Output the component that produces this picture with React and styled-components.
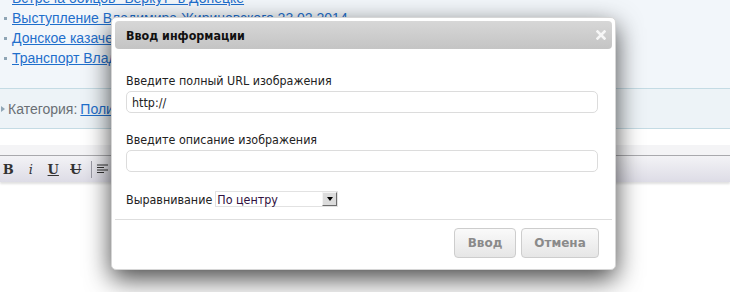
import React from 'react';
import styled, { createGlobalStyle } from 'styled-components';

const GlobalStyle = createGlobalStyle`
  html, body {
    margin: 0;
    padding: 0;
    background: #fff;
  }
  body {
    font-family: "DejaVu Sans Condensed", "DejaVu Sans", Verdana, sans-serif;
    font-size: 12.4px;
    color: #222;
  }
`;

const Page = styled.div`
  position: relative;
  width: 730px;
  height: 292px;
  overflow: hidden;
  background: #fff;
`;

const TopArea = styled.div`
  height: 88px;
  background: #f2f6fa;
  overflow: hidden;
`;

const NewsList = styled.ul`
  list-style: none;
  margin: -12px 0 0 0;
  padding: 0 0 0 4px;
  font-family: "Liberation Sans", Arial, sans-serif;
  font-size: 14px;
`;

const NewsItem = styled.li`
  display: flex;
  align-items: center;
  height: 20px;
  gap: 5px;
  &::before {
    content: '';
    width: 3px;
    height: 3px;
    background: #8fa5b5;
  }
  a {
    color: #1f6fcc;
    text-decoration: underline;
    white-space: nowrap;
  }
`;

const CategoryBar = styled.div`
  height: 39px;
  border-top: 1px solid #c4dbe4;
  border-bottom: 1px solid #c4dbe4;
  background: #edf3f7;
  display: flex;
  align-items: center;
  gap: 3px;
  font-family: "Liberation Sans", Arial, sans-serif;
  font-size: 14px;
  color: #6a6f74;
  a {
    color: #1f6fcc;
    text-decoration: underline;
  }
`;

const Arrow = styled.span`
  width: 0;
  height: 0;
  border-left: 4px solid #8fa5b5;
  border-top: 3px solid transparent;
  border-bottom: 3px solid transparent;
  margin-left: 1px;
`;

const Gap = styled.div`
  height: 16px;
`;

const EditorTop = styled.div`
  height: 10px;
  background: #f4f4f6;
  border-bottom: 1px solid #a9a9ad;
`;

const Toolbar = styled.div`
  height: 26px;
  display: flex;
  align-items: center;
  background: linear-gradient(#f3f3f6, #dddce6);
  box-shadow: 0 2px 2px rgba(0, 0, 0, 0.12);
  font-family: "DejaVu Serif", "Liberation Serif", serif;
  font-size: 13px;
  color: #333;
`;

const ToolButton = styled.span`
  width: 22.5px;
  text-align: center;
  font-weight: ${p => (p.$italic ? 'normal' : 'bold')};
  font-style: ${p => (p.$italic ? 'italic' : 'normal')};
  text-decoration: ${p => p.$deco || 'none'};
  &:first-child {
    margin-left: -3px;
  }
`;

const ToolSep = styled.span`
  width: 1px;
  height: 17px;
  background: #9a9aa4;
  margin: 0 5px 0 4px;
`;

const Dialog = styled.div`
  position: absolute;
  left: 111px;
  top: 17px;
  width: 505px;
  height: 253px;
  box-sizing: border-box;
  padding: 3px;
  background: #fff;
  border: 1px solid #d6d6d6;
  border-radius: 5px;
  box-shadow: 0 9px 26px rgba(0, 0, 0, 0.72);
  display: flex;
  flex-direction: column;
`;

const TitleBar = styled.div`
  height: 28px;
  flex: none;
  display: flex;
  align-items: center;
  justify-content: space-between;
  padding: 0 6px 0 11px;
  border-radius: 4px;
  background: linear-gradient(#d7d7d7, #c4c4c4);
  font-weight: bold;
  color: #111;
`;

const Close = styled.svg`
  width: 10px;
  height: 10px;
`;

const Body = styled.div`
  padding: 25px 12px 0 11px;
  display: flex;
  flex-direction: column;
`;

const Label = styled.label`
  display: block;
  line-height: 14px;
  margin-bottom: 3px;
  color: #222;
`;

const TextInput = styled.input`
  width: 472px;
  height: 22px;
  box-sizing: border-box;
  border: 1px solid #dcdcdc;
  border-radius: 5px;
  padding: 0 5px;
  font-family: inherit;
  font-size: 12.4px;
  color: #222;
  margin-bottom: ${p => p.$mb || 0}px;
  outline: none;
`;

const AlignRow = styled.div`
  display: flex;
  align-items: center;
  gap: 3px;
  height: 16px;
`;

const FakeSelect = styled.div`
  width: 123px;
  height: 16px;
  box-sizing: border-box;
  border: 1px solid #e2e2e2;
  display: flex;
  align-items: center;
  justify-content: space-between;
  padding-left: 1px;
  color: #301040;
  background: #fff;
`;

const SelectArrow = styled.span`
  width: 15px;
  height: 14px;
  box-sizing: border-box;
  border: 1px solid;
  border-color: #f4f4f4 #6d6d6d #6d6d6d #f4f4f4;
  background: #dcdcdc;
  display: flex;
  align-items: center;
  justify-content: center;
  &::after {
    content: '';
    border-top: 4px solid #000;
    border-left: 3.5px solid transparent;
    border-right: 3.5px solid transparent;
  }
`;

const Divider = styled.div`
  height: 1px;
  background: #dedede;
  margin: 12px -12px 0 -11px;
`;

const Footer = styled.div`
  display: flex;
  justify-content: flex-end;
  gap: 5px;
  padding: 8px 1px 0 0;
`;

const Button = styled.button`
  width: ${p => p.$w}px;
  height: 30px;
  border: 1px solid #cdcdcd;
  border-radius: 4px;
  background: linear-gradient(#fafafa, #e6e6e6);
  font-family: "DejaVu Sans", Verdana, sans-serif;
  font-weight: bold;
  font-size: 12px;
  color: #8a8a8a;
  padding: 0;
`;

export default function App() {
  return (
    <>
      <GlobalStyle />
      <Page>
        <TopArea>
          <NewsList>
            <NewsItem><a href="#">Встреча бойцов "Беркут" в Донецке</a></NewsItem>
            <NewsItem><a href="#">Выступление Владимира Жириновского 23.02.2014</a></NewsItem>
            <NewsItem><a href="#">Донское казачество на Майдане</a></NewsItem>
            <NewsItem><a href="#">Транспорт Владивостока</a></NewsItem>
          </NewsList>
        </TopArea>
        <CategoryBar>
          <Arrow />
          Категория: <a href="#">Политика</a>
        </CategoryBar>
        <Gap />
        <EditorTop />
        <Toolbar>
          <ToolButton>B</ToolButton>
          <ToolButton $italic>i</ToolButton>
          <ToolButton $deco="underline">U</ToolButton>
          <ToolButton $deco="line-through">U</ToolButton>
          <ToolSep />
          <svg width="11" height="10" viewBox="0 0 11 10">
            <path d="M0 1h11M0 3.5h7M0 6h11M0 8.5h7" stroke="#333" strokeWidth="1" />
          </svg>
        </Toolbar>

        <Dialog>
          <TitleBar>
            Ввод информации
            <Close viewBox="0 0 10 10">
              <path d="M1.5 1.5l7 7M8.5 1.5l-7 7" stroke="#f6f6f6" strokeWidth="2.6" strokeLinecap="square" />
            </Close>
          </TitleBar>
          <Body>
            <Label>Введите полный URL изображения</Label>
            <TextInput defaultValue="http://" $mb={20} />
            <Label>Введите описание изображения</Label>
            <TextInput defaultValue="" $mb={19} />
            <AlignRow>
              Выравнивание
              <FakeSelect>
                По центру
                <SelectArrow />
              </FakeSelect>
            </AlignRow>
            <Divider />
            <Footer>
              <Button $w={62}>Ввод</Button>
              <Button $w={78}>Отмена</Button>
            </Footer>
          </Body>
        </Dialog>
      </Page>
    </>
  );
}
